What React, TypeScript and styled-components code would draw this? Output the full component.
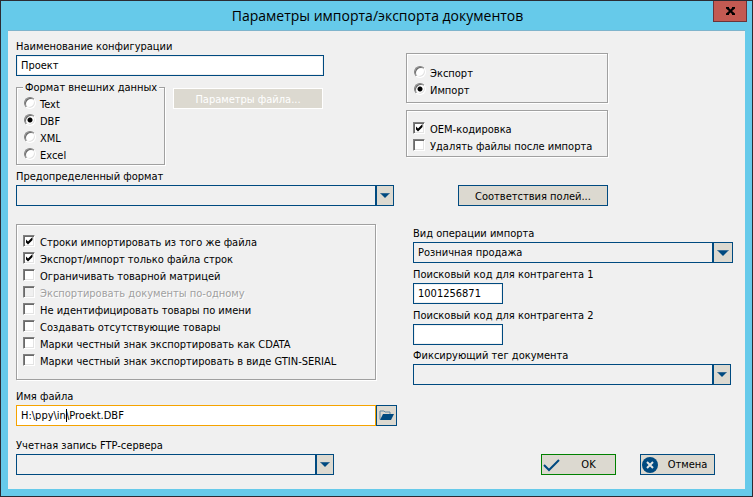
import React, { useEffect, useId, useRef } from "react";
import styled, { createGlobalStyle } from "styled-components";

const NAVY = "#004a80";
const SAND = "#dcd9d0";
const FACE = "#f0f0f0";
const UI_FONT = `"DejaVu Sans Condensed", "Noto Sans", sans-serif`;

const GlobalStyle = createGlobalStyle`
  *, *::before, *::after { box-sizing: border-box; }
  body { margin: 0; background: #66caea; }
  body, input, select, button {
    font-family: ${UI_FONT};
    font-size: 11px;
    line-height: 14px;
    color: #000;
  }
`;

const Dialog = styled.div`
  display: flex;
  flex-direction: column;
  min-height: 100vh;
  padding: 0 7px 7px;
  border: 1px solid #2b2b33;
  background: #66caea;
`;

const TitleBar = styled.header`
  display: grid;
  grid-template-columns: 34px 1fr 34px;
  align-items: start;
  height: 29px;
  margin-right: -2px;
`;

const Title = styled.h1`
  grid-column: 2;
  margin: 0;
  padding-top: 4px;
  text-align: center;
  font: 400 14px/22px "Open Sans", "Noto Sans", sans-serif;
`;

const CloseButton = styled.button`
  display: grid;
  place-items: center;
  height: 21px;
  padding: 0;
  border: 1px solid #6b3338;
  border-top: 0;
  background: #c35a52;
`;

const Body = styled.form`
  flex: 1;
  display: grid;
  grid-template-columns: 390fr 331fr;
  padding: 8px 8px 14px;
  border-top: 1px solid #7fb4cc;
  background: ${FACE};
`;

const LeftColumn = styled.div`
  display: flex;
  flex-direction: column;
  padding-right: 9px;
`;

const RightColumn = styled.div`
  display: flex;
  flex-direction: column;
  align-items: flex-start;
  padding-top: 14px;
`;

const Row = styled.div<{ $gap?: number; $top?: number }>`
  display: flex;
  align-items: flex-start;
  gap: ${(p) => p.$gap ?? 0}px;
  margin-top: ${(p) => p.$top ?? 0}px;
`;

const FieldBox = styled.div<{ $top?: number; $max?: number }>`
  display: flex;
  flex-direction: column;
  gap: 2px;
  width: 100%;
  max-width: ${(p) => (p.$max ? `${p.$max}px` : "none")};
  margin-top: ${(p) => p.$top ?? 0}px;
`;

const Label = styled.label`
  height: 14px;
  line-height: 16px;
  white-space: nowrap;
`;

const TextInput = styled.input<{ $active?: boolean }>`
  flex: 1;
  min-width: 0;
  width: 100%;
  height: 21px;
  min-height: 21px;
  padding: 0 4px;
  border: 1px solid ${(p) => (p.$active ? "#f5a300" : NAVY)};
  box-shadow: inset 0 0 0 1px ${(p) => (p.$active ? "#fff" : "#f0f0f0")};
  border-radius: 0;
  background: #fff;
  outline: 0;
`;

const PathInput = styled(TextInput)`
  grid-area: 1 / 1;
  caret-color: transparent;
`;

const PathBox = styled.div`
  flex: 1;
  display: grid;
  align-items: center;
`;

const Caret = styled.span`
  grid-area: 1 / 1;
  z-index: 1;
  justify-self: start;
  height: 13px;
  margin-left: 5px;
  border-right: 1px solid #000;
  color: transparent;
  pointer-events: none;
`;

const SelectBox = styled.div<{ $arrow: number }>`
  display: grid;
  grid-template-columns: 1fr ${(p) => p.$arrow}px;
  height: 21px;
`;

const SelectInput = styled.select`
  grid-area: 1 / 1 / 2 / 3;
  appearance: none;
  min-width: 0;
  padding: 0 24px 0 4px;
  border: 1px solid ${NAVY};
  border-radius: 0;
  background: ${FACE};
  outline: 0;
`;

const ArrowCell = styled.span`
  grid-area: 1 / 2;
  z-index: 1;
  display: grid;
  place-items: center;
  border: 1px solid ${NAVY};
  border-left-width: 2px;
  background: ${SAND};
  pointer-events: none;
`;

const Button = styled.button<{ $width: number; $edge?: string }>`
  display: flex;
  align-items: center;
  justify-content: center;
  width: ${(p) => p.$width}px;
  height: 21px;
  padding: 0;
  border: 1px solid ${(p) => p.$edge ?? NAVY};
  background: ${SAND};
  white-space: nowrap;
  &:disabled {
    border-color: #fff;
    color: #fff;
  }
`;

const TextButton = styled(Button)`
  padding-top: 2px;
`;

const ButtonIcon = styled.span`
  display: flex;
  width: 20px;
`;

const ButtonText = styled.span`
  flex: 1;
  text-align: center;
`;

const Group = styled.fieldset<{ $width?: number; $pad: string }>`
  min-width: 0;
  width: ${(p) => (p.$width ? `${p.$width}px` : "auto")};
  margin: 0;
  padding: ${(p) => p.$pad};
  border: 1px solid #a0a0a0;
  box-shadow: 1px 1px 0 #fff, inset 1px 1px 0 #fff;
`;

const Legend = styled.legend`
  height: 14px;
  padding: 0 2px;
  line-height: 16px;
  white-space: nowrap;
  background: ${FACE};
`;

const Option = styled.label<{ $disabled?: boolean }>`
  display: grid;
  grid-template-columns: 13px 1fr;
  column-gap: 4px;
  align-items: center;
  height: 17px;
  white-space: nowrap;
  color: ${(p) => (p.$disabled ? "#a0a0a0" : "#000")};
  text-shadow: ${(p) => (p.$disabled ? "1px 1px 0 #fff" : "none")};
`;

const OptionText = styled.span`
  padding-top: 2px;
`;

const RadioInput = styled.input`
  appearance: none;
  justify-self: end;
  width: 12px;
  height: 12px;
  margin: 0 0 2px;
  border: 1px solid;
  border-color: #808080 #fff #fff #808080;
  border-radius: 50%;
  background: #fff;
  box-shadow: inset 1px 1px 0 #696969, inset -1px -1px 0 #e3e3e3;
  &:checked {
    background: radial-gradient(circle, #000 2px, #fff 3px);
  }
`;

const Mark = styled.span`
  display: grid;
  width: 12px;
  height: 12px;
  margin-bottom: 1px;
  & > * { grid-area: 1 / 1; }
  & > svg { z-index: 1; pointer-events: none; visibility: hidden; }
  & > input:checked + svg { visibility: visible; }
`;

const CheckInput = styled.input`
  appearance: none;
  width: 12px;
  height: 12px;
  margin: 0;
  border: 1px solid;
  border-color: #808080 #fff #fff #808080;
  background: #fff;
  box-shadow: inset 1px 1px 0 #696969, inset -1px -1px 0 #e3e3e3;
  &:disabled { background: ${FACE}; }
`;

const FlagsGroup = styled(Group)`
  margin: 18px 21px 0 0;
`;

const MappingRow = styled(Row)`
  padding-left: 52px;
  margin-bottom: 20px;
`;

const ImportFields = styled.div`
  width: 100%;
  padding: 0 4px 0 7px;
`;

const Actions = styled(Row)`
  align-self: flex-end;
  margin-top: auto;
  padding-right: 22px;
`;

const Arrow = ({ size }: { size: number }) => (
  <svg width={size} height={size / 2} viewBox="0 0 12 6" aria-hidden="true">
    <path d="M0 0h12L6 6z" fill={NAVY} />
    <path d="M0 0h12" stroke="#7895ab" />
  </svg>
);

function Field(props: { label: string; value: string; top?: number; max?: number }) {
  const id = useId();
  return (
    <FieldBox $top={props.top} $max={props.max}>
      <Label htmlFor={id}>{props.label}</Label>
      <TextInput id={id} defaultValue={props.value} />
    </FieldBox>
  );
}

function SelectField(props: { label: string; value?: string; top?: number; max?: number; arrow?: number }) {
  const id = useId();
  const arrow = props.arrow ?? 19;
  return (
    <FieldBox $top={props.top} $max={props.max}>
      <Label htmlFor={id}>{props.label}</Label>
      <SelectBox $arrow={arrow}>
        <SelectInput id={id}>
          <option>{props.value ?? ""}</option>
        </SelectInput>
        <ArrowCell>
          <Arrow size={arrow > 19 ? 12 : 10} />
        </ArrowCell>
      </SelectBox>
    </FieldBox>
  );
}

function Radio({ name, label, checked }: { name: string; label: string; checked?: boolean }) {
  return (
    <Option>
      <RadioInput type="radio" name={name} defaultChecked={checked} />
      <OptionText>{label}</OptionText>
    </Option>
  );
}

function Check({ label, checked, disabled }: { label: string; checked?: boolean; disabled?: boolean }) {
  return (
    <Option $disabled={disabled}>
      <Mark>
        <CheckInput type="checkbox" defaultChecked={checked} disabled={disabled} />
        <svg width="12" height="12" viewBox="0 0 12 12" aria-hidden="true">
          <path d="M3 4.5v3l2 2 4.5-4.500v-3L5 6.500z" fill="#000" />
        </svg>
      </Mark>
      <OptionText>{label}</OptionText>
    </Option>
  );
}

function FileField() {
  const ref = useRef<HTMLInputElement>(null);
  const id = useId();
  useEffect(() => {
    ref.current?.focus();
    ref.current?.setSelectionRange(9, 9);
  }, []);
  return (
    <FieldBox $top={9}>
      <Label htmlFor={id}>Имя файла</Label>
      <Row>
        <PathBox>
          <PathInput id={id} ref={ref} $active defaultValue={"H:\\ppy\\in\\Proekt.DBF"} spellCheck={false} />
          <Caret aria-hidden="true">{"H:\\ppy\\in"}</Caret>
        </PathBox>
        <Button type="button" $width={21} aria-label="Открыть">
          <svg width="15" height="11" viewBox="0 0 15 11" aria-hidden="true">
            <path d="M1 9.500V1h4l1 1h5v2" fill="none" stroke="#6489a4" />
            <path d="M4 4h11l-3 6H1z" fill={NAVY} />
          </svg>
        </Button>
      </Row>
    </FieldBox>
  );
}

const FORMATS = ["Text", "DBF", "XML", "Excel"];

const FLAGS = [
  { label: "Строки импортировать из того же файла", checked: true },
  { label: "Экспорт/импорт только файла строк", checked: true },
  { label: "Ограничивать товарной матрицей" },
  { label: "Экспортировать документы по-одному", disabled: true },
  { label: "Не идентифицировать товары по имени" },
  { label: "Создавать отсутствующие товары" },
  { label: "Марки честный знак экспортировать как CDATA" },
  { label: "Марки честный знак экспортировать в виде GTIN-SERIAL" },
];

export default function App() {
  return (
    <>
      <GlobalStyle />
      <Dialog role="dialog" aria-labelledby="dialog-title">
        <TitleBar>
          <Title id="dialog-title">Параметры импорта/экспорта документов</Title>
          <CloseButton type="button" aria-label="Закрыть">
            <svg width="9" height="8" viewBox="0 0 9 8" aria-hidden="true">
              <path d="M0 0h3v1l1.500 1.500L6 1V0h3v1.500L6 4l3 2.500V8H6V7L4.500 5.500 3 7v1H0V6.500L3 4 0 1.500z" fill="#000" />
            </svg>
          </CloseButton>
        </TitleBar>
        <Body onSubmit={(e) => e.preventDefault()}>
          <LeftColumn>
            <Field label="Наименование конфигурации" value="Проект" max={308} />
            <Row $top={4} $gap={8}>
              <Group $width={149} $pad="1px 6px">
                <Legend>Формат внешних данных</Legend>
                {FORMATS.map((f) => (
                  <Radio key={f} name="format" label={f} checked={f === "DBF"} />
                ))}
              </Group>
              <Row $top={8}>
                <TextButton type="button" $width={150} disabled>
                  Параметры файла...
                </TextButton>
              </Row>
            </Row>
            <SelectField label="Предопределенный формат" top={4} max={378} />
            <FlagsGroup $pad="8px 6px 10px">
              {FLAGS.map((f) => (
                <Check key={f.label} {...f} />
              ))}
            </FlagsGroup>
            <FileField />
            <SelectField label="Учетная запись FTP-сервера" top={12} max={318} />
          </LeftColumn>
          <RightColumn>
            <Group $width={202} $pad="10px 6px 4px">
              <Radio name="direction" label="Экспорт" />
              <Radio name="direction" label="Импорт" checked />
            </Group>
            <Row $top={7}>
              <Group $width={202} $pad="9px 6px 2px">
                <Check label="OEM-кодировка" checked />
                <Check label="Удалять файлы после импорта" />
              </Group>
            </Row>
            <MappingRow $top={28}>
              <TextButton type="button" $width={150}>
                Соответствия полей...
              </TextButton>
            </MappingRow>
            <ImportFields>
              <SelectField label="Вид операции импорта" value="Розничная продажа" arrow={21} />
              <Field label="Поисковый код для контрагента 1" value="1001256871" top={4} max={90} />
              <Field label="Поисковый код для контрагента 2" value="" top={4} max={90} />
              <SelectField label="Фиксирующий тег документа" top={3} max={318} />
            </ImportFields>
            <Actions $gap={24}>
              <Button type="submit" $width={75} $edge="#008000">
                <ButtonIcon>
                  <svg width="20" height="17" viewBox="0 0 20 17" aria-hidden="true">
                    <path d="M2 9l5 5L17 4" fill="none" stroke={NAVY} strokeWidth="2" />
                  </svg>
                </ButtonIcon>
                <ButtonText>OK</ButtonText>
              </Button>
              <Button type="button" $width={75}>
                <ButtonIcon>
                  <svg width="20" height="18" viewBox="0 0 20 18" aria-hidden="true">
                    <circle cx="9" cy="9" r="8" fill={NAVY} />
                    <path d="M6 6l6 6M12 6l-6 6" stroke="#e4e6e4" strokeWidth="2" />
                  </svg>
                </ButtonIcon>
                <ButtonText>Отмена</ButtonText>
              </Button>
            </Actions>
          </RightColumn>
        </Body>
      </Dialog>
    </>
  );
}
